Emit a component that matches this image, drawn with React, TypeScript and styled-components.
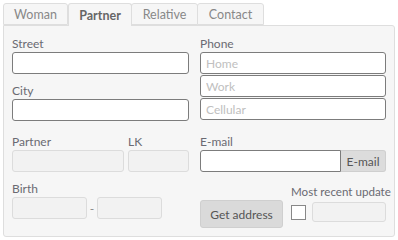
import React from 'react';
import styled, { createGlobalStyle } from 'styled-components';

const GlobalStyle = createGlobalStyle`
  body {
    margin: 0;
    background: #ffffff;
    font-family: "Segoe UI", Lato, "Open Sans", sans-serif;
    font-size: 12px;
    color: #666;
  }
`;

const Wrapper = styled.div`
  padding: 3px 3px 0 3px;
  width: 392px;
`;

const TabBar = styled.div`
  display: flex;
  height: 22px;
`;

const Tab = styled.div<{ $active?: boolean; $width: number }>`
  box-sizing: border-box;
  width: ${p => p.$width}px;
  height: ${p => (p.$active ? 23 : 22)}px;
  display: flex;
  align-items: center;
  justify-content: center;
  background: #f6f6f6;
  border: 1px solid #dedede;
  border-bottom: ${p => (p.$active ? 'none' : '1px solid #dedede')};
  border-radius: 3px 3px 0 0;
  margin-left: ${p => (p.$active ? 0 : -1)}px;
  color: ${p => (p.$active ? '#666' : '#888')};
  font-size: 12.5px;
  font-weight: ${p => (p.$active ? 700 : 400)};
  position: relative;
  z-index: ${p => (p.$active ? 1 : 0)};
  &:first-child {
    margin-left: 0;
  }
`;

const Panel = styled.div`
  box-sizing: border-box;
  height: 212px;
  background: #f6f6f6;
  border: 1px solid #dedede;
  border-radius: 0 3px 3px 3px;
  padding: 10px 8px 0 8px;
  display: grid;
  grid-template-columns: 177px 186px;
  column-gap: 11px;
`;

const Column = styled.div`
  display: flex;
  flex-direction: column;
`;

const Field = styled.div<{ $gap?: number }>`
  display: flex;
  flex-direction: column;
  margin-bottom: ${p => p.$gap ?? 9}px;
`;

const Label = styled.label<{ $small?: boolean }>`
  height: 15px;
  line-height: 15px;
  color: #6a6a72;
  margin-bottom: 1px;
  white-space: nowrap;
  font-size: ${p => (p.$small ? '11.6px' : 'inherit')};
`;

const Input = styled.input<{ $w?: number; $h?: number }>`
  box-sizing: border-box;
  height: ${p => p.$h ?? 22}px;
  width: ${p => (p.$w ? `${p.$w}px` : '100%')};
  border: 1px solid #7c7c7c;
  border-radius: 3px;
  background: #fff;
  font: inherit;
  padding: 0 5px;
  margin: 0;
  &::placeholder {
    color: #c0c0c0;
  }
  &:disabled {
    border-color: #dcdcdc;
    background: #f2f2f2;
  }
`;

const Stack = styled.div`
  display: flex;
  flex-direction: column;
  gap: 1px;
`;

const Row = styled.div<{ $gap?: number }>`
  display: flex;
  align-items: flex-end;
  gap: ${p => p.$gap ?? 4}px;
`;

const Dash = styled.span`
  width: 10px;
  text-align: center;
  color: #888;
  align-self: center;
`;

const AddonButton = styled.button`
  box-sizing: border-box;
  height: 22px;
  width: 45px;
  border: 1px solid #cfcfcf;
  border-left: none;
  border-radius: 0 3px 3px 0;
  background: #dcdcdc;
  color: #555;
  font: inherit;
  padding: 0;
`;

const AddonInput = styled(Input)`
  border-radius: 3px 0 0 3px;
  flex: 1;
`;

const ActionButton = styled.button`
  box-sizing: border-box;
  width: 83px;
  height: 28px;
  flex-shrink: 0;
  border: 1px solid #cfcfcf;
  border-radius: 3px;
  background: #dadada;
  color: #555;
  font: inherit;
  padding: 0;
`;

const UpdateBox = styled.div`
  display: flex;
  flex-direction: column;
  width: 95px;
  margin-bottom: 6px;
`;

const UpdateRow = styled.div`
  display: flex;
  align-items: center;
  gap: 6px;
  margin-top: 2px;
`;

const Check = styled.span`
  box-sizing: border-box;
  flex-shrink: 0;
  width: 15px;
  height: 15px;
  border: 1px solid #888;
  background: #fff;
`;

export default function App() {
  return (
    <Wrapper>
      <GlobalStyle />
      <TabBar>
        <Tab $width={65}>Woman</Tab>
        <Tab $width={64} $active>Partner</Tab>
        <Tab $width={67}>Relative</Tab>
        <Tab $width={67}>Contact</Tab>
      </TabBar>
      <Panel>
        <Column>
          <Field>
            <Label>Street</Label>
            <Input />
          </Field>
          <Field $gap={13}>
            <Label>City</Label>
            <Input />
          </Field>
          <Row>
            <Field>
              <Label>Partner</Label>
              <Input $w={112} disabled />
            </Field>
            <Field>
              <Label>LK</Label>
              <Input $w={61} disabled />
            </Field>
          </Row>
          <Field>
            <Label>Birth</Label>
            <Row $gap={0}>
              <Input $w={75} disabled />
              <Dash>-</Dash>
              <Input $w={65} disabled />
            </Row>
          </Field>
        </Column>
        <Column>
          <Field $gap={14}>
            <Label>Phone</Label>
            <Stack>
              <Input placeholder="Home" />
              <Input placeholder="Work" />
              <Input placeholder="Cellular" />
            </Stack>
          </Field>
          <Field $gap={12}>
            <Label>E-mail</Label>
            <Row $gap={0}>
              <AddonInput />
              <AddonButton>E-mail</AddonButton>
            </Row>
          </Field>
          <Row $gap={8}>
            <ActionButton>Get address</ActionButton>
            <UpdateBox>
              <Label $small>Most recent update</Label>
              <UpdateRow>
                <Check />
                <Input $h={20} disabled />
              </UpdateRow>
            </UpdateBox>
          </Row>
        </Column>
      </Panel>
    </Wrapper>
  );
}
